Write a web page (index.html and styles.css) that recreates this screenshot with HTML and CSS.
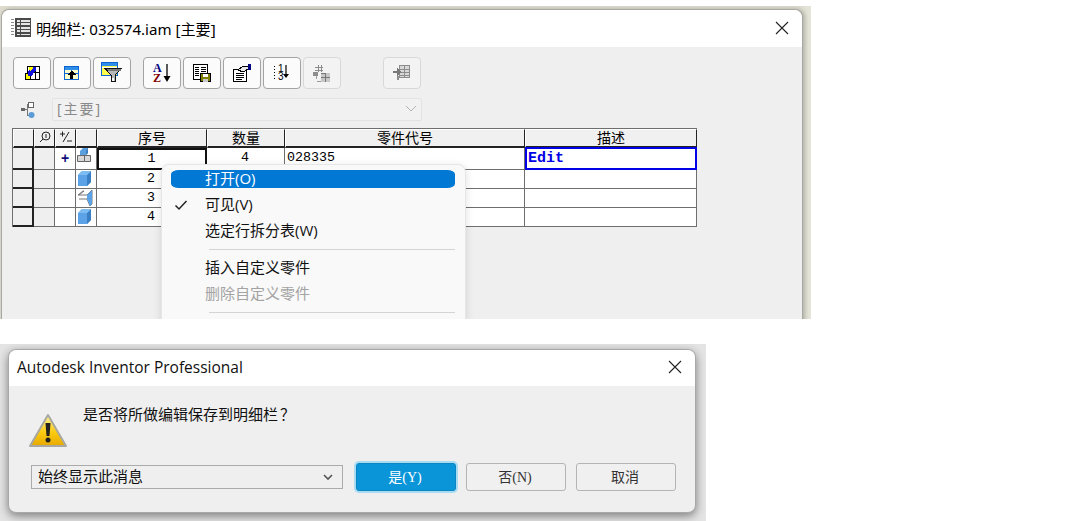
FILE: index.html
```html
<!DOCTYPE html>
<html lang="zh-CN">
<head>
<meta charset="utf-8">
<title>明细栏</title>
<link rel="stylesheet" href="styles.css">
</head>
<body>
<section class="shot shot-top">
  <div class="win">
    <header class="titlebar titlebar-top">
      <svg class="title-icon" width="21" height="21" viewBox="0 0 21 21" shape-rendering="crispEdges">
        <path d="M4 1h16v19H4z" fill="#e4e4e4"/>
        <path d="M4 1h16v2H4zM4 5h16v1H4zM4 8h16v2H4zM4 12h16v1H4zM4 15h16v2H4zM4 18h16v2H4zM4 1h2v19H4zM9 1h1v19H9zM19 1h1v19h-1z" fill="#4a4a4a"/>
        <path d="M0 2h3v1H0zM0 5h3v1H0zM0 8h3v1H0zM0 11h3v1H0zM0 14h3v1H0zM0 17h3v1H0z" fill="#8a8a8a"/>
      </svg>
      <span class="title-text">明细栏: 032574.iam [主要]</span>
      <svg class="close" width="14" height="14" viewBox="0 0 14 14"><path d="M1 1l12 12M13 1L1 13" stroke="#222" stroke-width="1.1" fill="none"/></svg>
    </header>
    <div class="pane">
      <div class="toolbar">
        <button class="tool"><svg width="20" height="20" viewBox="0 0 20 20" shape-rendering="crispEdges">
          <path d="M5.500 3.500h12v13h-12z" fill="#fff" stroke="#000"/><path d="M7 4h6v4H7z" fill="#ffff00"/><path d="M13.500 4v12M9 9.500h8" stroke="#000"/>
          <path d="M3.500 10.500h5v6h-5z" fill="#ffff00" stroke="#000"/><path d="M6 9l1-2 1 1 3-3-1-1h4v5l-1-1-3 3 1 1-2 1H6z" fill="#1010e0"/></svg></button>
        <button class="tool"><svg width="20" height="20" viewBox="0 0 20 20" shape-rendering="crispEdges">
          <path d="M2.500 3.500h14v13h-14z" fill="#ffffc8" stroke="#0a64d2"/><path d="M3 4h13v3H3z" fill="#2f8fe8"/><path d="M3 10.500h13M9.500 7v9" stroke="#0a64d2"/>
          <path d="M5 12l4.500-4.500L14 12h-3v4H8v-4z" fill="#000"/></svg></button>
        <button class="tool"><svg width="24" height="24" viewBox="0 0 24 24" shape-rendering="crispEdges">
          <path d="M1.500 1.500h16v13h-16z" fill="#ffff50" stroke="#0a64d2"/><path d="M2 2h15v3H2z" fill="#2f8fe8"/><path d="M2 6h15v1H2z" fill="#fff"/>
          <path d="M5 7.500h16.500L15 14v6h-4v-6z" fill="#b8b8b8" stroke="#111"/><path d="M6 8h15v2H8z" fill="#777"/><path d="M12 17h2v3h-2z" fill="#fff"/></svg></button>
        <span class="tool-gap"></span>
        <button class="tool"><svg width="20" height="22" viewBox="0 0 20 22">
          <text class="az"><tspan x="1" y="10" class="az-a">A</tspan><tspan x="1" y="20" class="az-z">Z</tspan></text>
          <path d="M15 2v13" stroke="#000" stroke-width="1.300"/><path d="M11.500 14h7L15 20z" fill="#000"/></svg></button>
        <button class="tool"><svg width="20" height="20" viewBox="0 0 20 20" shape-rendering="crispEdges">
          <path d="M1.500 1.500h14v15h-14z" fill="#fff" stroke="#000"/><path d="M3 4h4v1H3zM3 6h4v1H3zM3 8h4v1H3zM3 10h4v1H3zM3 12h4v1H3zM9 4h5v1H9zM9 6h5v1H9zM9 8h5v1H9z" fill="#000"/>
          <path d="M8.500 10.500h10v8h-10z" fill="#808000" stroke="#000"/><path d="M11 11h5v3h-5z" fill="#fff"/><path d="M11 16h5v3h-5z" fill="#c8c8c8"/></svg></button>
        <button class="tool"><svg width="22" height="20" viewBox="0 0 22 20" shape-rendering="crispEdges">
          <path d="M2.500 6.500h13v12h-13z" fill="#fff" stroke="#000"/><path d="M5 10h8v1H5zM5 12h8v1H5zM5 14h8v1H5zM5 16h6v1H5z" fill="#000"/>
          <path d="M7 7l5-4h5v3l-5 3z" fill="#e8e8e8" stroke="#000"/><path d="M17 1h3v6h-3z" fill="#000080"/></svg></button>
        <button class="tool"><svg width="20" height="20" viewBox="0 0 20 20">
          <text class="nums"><tspan x="6" y="9">1</tspan><tspan x="6" y="17">3</tspan></text>
          <path d="M2 3h1v1H2zM2 6h1v1H2zM2 9h1v1H2zM2 12h1v1H2zM2 15h1v1H2z" fill="#000"/>
          <path d="M14 2v10" stroke="#000" stroke-width="1.200"/><path d="M11 11h6l-3 4z" fill="#000"/></svg></button>
        <button class="tool off"><svg width="20" height="20" viewBox="0 0 20 20" shape-rendering="crispEdges">
          <path d="M6 2v7M9 2v7M3 4h8M3 7h8" stroke="#8c8c8c" fill="none"/><path d="M1 9h5v4H1z" fill="#8c8c8c"/>
          <path d="M9 10h9v9H9z" fill="#c8c8c8"/><path d="M9 10h5v1H9zM9 14h9v1H9zM13 10h1v9h-1z" fill="#777"/><path d="M4 13h1v6h4v-1H5z" fill="#9a9a9a"/></svg></button>
        <span class="tool-gap-wide"></span>
        <button class="tool off"><svg width="20" height="20" viewBox="0 0 20 20" shape-rendering="crispEdges">
          <path d="M7.500 2.500h10v12h-10z" fill="#d8d8d8" stroke="#8c8c8c"/><path d="M8 6h9v1H8zM8 9h9v1H8zM8 12h9v1H8zM12 3h1v11h-1z" fill="#8c8c8c"/>
          <path d="M1 8h4V5l4 4-4 4v-3H1z" fill="#777"/><path d="M5 13h2v4H5z" fill="#8c8c8c"/></svg></button>
      </div>
      <div class="bomrow">
        <svg class="tree" width="16" height="18" viewBox="0 0 16 18" shape-rendering="crispEdges">
          <path d="M1 7h4v3H1z" fill="#666"/><path d="M5 8.500h3M7.500 3v11h2" stroke="#777" fill="none"/><path d="M8.500 1.500h5v5h-5z" fill="#fff" stroke="#666"/>
          <circle cx="11.500" cy="14" r="3" fill="#5b9bd5" shape-rendering="auto"/></svg>
        <div class="bomselect"><span>[主要]</span>
          <svg width="12" height="7" viewBox="0 0 12 7"><path d="M1 1l5 5 5-5" stroke="#b4b4b4" fill="none"/></svg></div>
      </div>
      <div class="grid">
        <div class="cell head"></div>
        <div class="cell head"><svg width="14" height="14" viewBox="0 0 14 14"><circle cx="8" cy="6" r="4" fill="none" stroke="#222"/><path d="M5 9l-3 3M8 4v4" stroke="#222" fill="none"/></svg></div>
        <div class="cell head"><svg width="14" height="14" viewBox="0 0 14 14"><path d="M1 4h5M3.500 1.500v5M10 2L4 12M8 11h5" stroke="#222" fill="none"/></svg></div>
        <div class="cell head"></div>
        <div class="cell head">序号</div>
        <div class="cell head">数量</div>
        <div class="cell head">零件代号</div>
        <div class="cell head">描述</div>

        <div class="cell rowhead"></div>
        <div class="cell shade"></div>
        <div class="cell plus">+</div>
        <div class="cell icon-top"><svg width="18" height="18" viewBox="0 0 18 18"><path d="M4 3l3-3h5v5l-2 2H4z" fill="#5b9fdf"/><path d="M10 3l2-3v5l-2 2z" fill="#3f7fc0"/><path d="M1.500 7.500h7v6h-7zM8.500 7.500h6v6h-6z" fill="#d8d8d8" stroke="#666"/></svg></div>
        <div class="cell num picked">1</div>
        <div class="cell num">4</div>
        <div class="cell code">028335</div>
        <div class="cell edit">Edit</div>

        <div class="cell rowhead"></div>
        <div class="cell shade"></div>
        <div class="cell"></div>
        <div class="cell"><svg width="18" height="18" viewBox="0 0 18 18"><path d="M2 5l4-4h9v11l-4 4H2z" fill="#5ba3e6"/><path d="M11 5l4-4v11l-4 4z" fill="#3a7fc4"/><path d="M2 5l4-4h9l-4 4z" fill="#7dbcf0"/></svg></div>
        <div class="cell num">2</div>
        <div class="cell num"></div>
        <div class="cell"></div>
        <div class="cell"></div>

        <div class="cell rowhead"></div>
        <div class="cell shade"></div>
        <div class="cell"></div>
        <div class="cell"><svg width="18" height="18" viewBox="0 0 18 18"><path d="M2 6l5-4h1L3 6zM3 6h8l5-5v14l-2 2-3-7H3" fill="none" stroke="#777"/><path d="M11 6l5-5v14l-2 2-3-7z" fill="#5ba3e6"/></svg></div>
        <div class="cell num">3</div>
        <div class="cell num"></div>
        <div class="cell"></div>
        <div class="cell"></div>

        <div class="cell rowhead"></div>
        <div class="cell shade"></div>
        <div class="cell"></div>
        <div class="cell"><svg width="18" height="18" viewBox="0 0 18 18"><path d="M2 5l4-4h9v11l-4 4H2z" fill="#5ba3e6"/><path d="M11 5l4-4v11l-4 4z" fill="#3a7fc4"/><path d="M2 5l4-4h9l-4 4z" fill="#7dbcf0"/></svg></div>
        <div class="cell num">4</div>
        <div class="cell num"></div>
        <div class="cell"></div>
        <div class="cell"></div>
      </div>
    </div>
  </div>
  <nav class="menu">
    <div class="item active">打开(O)</div>
    <div class="item"><svg class="check" width="14" height="12" viewBox="0 0 14 12"><path d="M1.500 6.500l3.500 3.500 7.500-8" stroke="#222" stroke-width="1.500" fill="none"/></svg>可见(V)</div>
    <div class="item">选定行拆分表(W)</div>
    <div class="sep"></div>
    <div class="item">插入自定义零件</div>
    <div class="item disabled">删除自定义零件</div>
    <div class="sep"></div>
  </nav>
</section>

<section class="shot shot-bottom">
  <div class="alert">
    <header class="titlebar titlebar-bottom">
      <span class="alert-title">Autodesk Inventor Professional</span>
      <svg class="close" width="14" height="14" viewBox="0 0 14 14"><path d="M1 1l12 12M13 1L1 13" stroke="#222" stroke-width="1.100" fill="none"/></svg>
    </header>
    <div class="alert-body">
      <div class="msg-row">
        <svg width="40" height="36" viewBox="0 0 40 36">
          <defs><linearGradient id="warn" x1="0" y1="0" x2="0" y2="1"><stop offset="0" stop-color="#fff3a0"/><stop offset=".55" stop-color="#fbcc10"/><stop offset="1" stop-color="#e8a800"/></linearGradient></defs>
          <path d="M20 2L38 33H2z" fill="url(#warn)" stroke="#a8a8a0" stroke-width="2" stroke-linejoin="round"/>
          <path d="M17.500 10h5l-1 13h-3z" fill="#222"/><circle cx="20" cy="27" r="2.500" fill="#222"/>
        </svg>
        <p class="msg">是否将所做编辑保存到明细栏<span class="q">？</span></p>
      </div>
      <div class="actions">
        <div class="combo"><span>始终显示此消息</span>
          <svg width="10" height="7" viewBox="0 0 10 7"><path d="M1 1l4 4 4-4" stroke="#555" stroke-width="1.600" fill="none"/></svg></div>
        <button class="btn primary">是(Y)</button>
        <button class="btn">否(N)</button>
        <button class="btn">取消</button>
      </div>
    </div>
  </div>
</section>
</body>
</html>
```

FILE: styles.css
```css
* { box-sizing: border-box; }
html, body { margin: 0; padding: 0; background: #fff; overflow: hidden; }
body { width: 1065px; height: 521px; padding-top: 6px; font-family: "Noto Sans", "Noto Sans CJK SC", sans-serif; color: #000; }

.shot { position: relative; overflow: hidden; }
.shot-top {
  width: 811px; height: 313px; padding: 3px 0 0 1px;
  background: linear-gradient(90deg, #dedccf 0, #dedccf 98%, #e6e5da 100%);
}
.win {
  width: 802px; height: 330px;
  background: #efefef; border: 1px solid #a9a9a3; border-bottom: 0; border-radius: 8px 8px 0 0;
  box-shadow: 2px 0 4px rgba(90,90,80,.35);
}
.titlebar { display: flex; align-items: center; background: #fff; border-radius: 8px 8px 0 0; }
.titlebar-top { height: 37px; padding: 0 13px 2px 9px; }
.title-icon { margin-right: 4px; flex: none; }
.title-text { font-size: 15.100px; flex: 1; }
.close { flex: none; }

.pane { padding: 10px 0 0 11px; }
.toolbar { display: flex; gap: 2px; height: 32px; }
.tool {
  width: 38px; height: 32px; padding: 0; display: flex; align-items: center; justify-content: center;
  background: #fbfbfb; border: 1px solid #a3a3a3; border-radius: 4px;
}
.tool.off { background: #f3f3f3; border-color: #d8d8d8; }
.tool-gap { width: 8px; }
.tool-gap-wide { width: 38px; }
.az { font: bold 12px "Liberation Serif", serif; }
.az-a { fill: #000080; }
.az-z { fill: #800000; }
.nums { font: 10px "Liberation Sans", sans-serif; fill: #000; }

.bomrow { display: flex; align-items: center; height: 23px; margin-top: 9px; padding-left: 7px; }
.tree { flex: none; margin-right: 16px; }
.bomselect {
  width: 370px; height: 23px; display: flex; align-items: center; justify-content: space-between;
  padding: 0 4px 3px 4px; background: #f1f1f1; border: 1px solid #e3e3e3; border-radius: 2px;
  font-size: 14px; color: #8a8a8a; letter-spacing: 2px;
}

.grid {
  display: grid; width: 685px; margin: 7px 0 0 -1px;
  grid-template-columns: 21px 21px 21px 21px 110px 78px 240px 172px;
  grid-template-rows: 19px 22px 19px 19px 19px;
  border-top: 1px solid #6e6e6e; border-left: 1px solid #6e6e6e;
  font: 14px "Liberation Mono", "Noto Sans CJK SC", monospace;
}
.cell {
  display: flex; align-items: center; justify-content: flex-start; overflow: hidden;
  background: #fff; border-right: 1px solid #6e6e6e; border-bottom: 1px solid #6e6e6e;
}
.head {
  justify-content: center; background: #f0f0f0; font-family: "Noto Sans CJK SC", sans-serif; font-size: 14px; line-height: 14px; padding-bottom: 2px; overflow: visible;
  border-right: 1px solid #222; border-bottom: 2px solid #222; border-top: 1px solid #fff; border-left: 1px solid #fff;
}
.rowhead { background: #efefef; border-right: 2px solid #222; border-bottom: 2px solid #222; }
.shade { background: #efefef; }
.plus { justify-content: center; color: #10107a; padding-bottom: 1px; font: bold 14px "Liberation Sans", sans-serif; }
.icon-top { align-items: flex-start; }
.num { justify-content: center; font-size: 13.330px; padding: 0 1px 2px 0; }
.code { padding-left: 2px; padding-bottom: 2px; font-size: 13.330px; }
.picked { border: 2px solid #111; }
.edit { border: 2px solid #0000e6; padding-left: 1px; color: #0000e6; font: bold 15px "Liberation Mono", monospace; margin-top: -1px; }

.menu {
  position: absolute; left: 161px; top: 158px; width: 305px; padding: 1px 10px 10px 9px;
  background: #f9f9f9; border: 1px solid #e6e6e6; border-radius: 8px;
  box-shadow: 0 2px 8px rgba(0,0,0,.12);
  font: 15px "Open Sans", "Noto Sans CJK SC", sans-serif; color: #111;
}
.item { position: relative; height: 26px; line-height: 16px; padding: 4px 0 0 34px; }
.active { background: #0078d4; background-clip: padding-box; color: #fff; padding: 0 0 0 34px; border-top: 4px solid transparent; border-bottom: 4px solid transparent; border-radius: 8px; }
.disabled { color: #a3a3a3; }
.check { position: absolute; left: 3px; top: 7px; }
.sep { height: 1px; margin: 5px 0 5px 38px; background: #d4d4d4; }

.shot-bottom { width: 706px; height: 177px; margin-top: 25px; padding: 5px 0 0 8px; background: #e4e4e4; }
.alert {
  width: 688px; height: 164px; display: flex; flex-direction: column;
  background: #efefef; border: 1px solid #a8a8a8; border-radius: 8px;
  box-shadow: 0 3px 10px rgba(0,0,0,.45);
}
.titlebar-bottom { height: 36px; padding: 0 13px 2px 8px; flex: none; }
.alert-title { flex: 1; font: 15.500px "Open Sans", sans-serif; color: #111; }
.alert-body { padding: 27px 19px 0 22px; }
.msg-row { display: flex; align-items: flex-start; height: 35px; margin-left: -3px; }
.msg { margin: -9px 0 0 15px; font: 15px/20px "Noto Sans CJK SC", sans-serif; color: #111; }
.q { margin-left: 2px; }
.actions { display: flex; align-items: center; gap: 10px; margin-top: 15px; height: 28px; }
.combo {
  width: 312px; height: 24px; margin-right: 3px; display: flex; align-items: center; justify-content: space-between;
  padding: 0 9px 3px 6px; background: #efefef; border: 1px solid #ababab;
  font: 15px "Noto Sans CJK SC", sans-serif; color: #111;
}
.combo svg { margin-top: 3px; }
.btn {
  width: 100px; height: 28px; padding: 0 2px 2px 0; background: #f0f0f0; border: 1px solid #b4b4b4; border-radius: 3px;
  font: 14px "Liberation Serif", "Noto Sans CJK SC", serif; color: #333;
}
.primary { background: #0995d8; border-color: #0a86c4; color: #fff; box-shadow: 0 0 0 2px #a9dcf3; }
```
